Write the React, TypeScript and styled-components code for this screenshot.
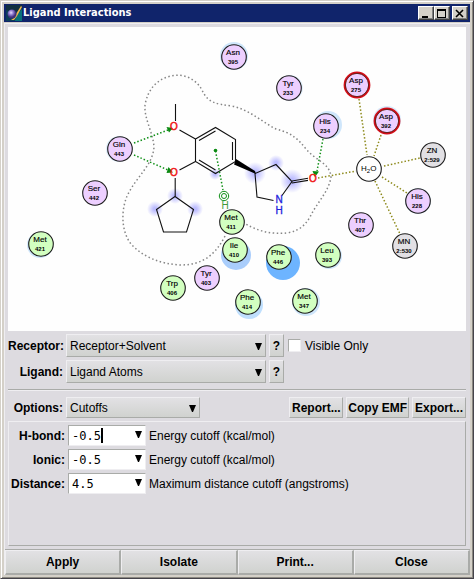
import React, { useState } from "react";
import styled, { createGlobalStyle, css } from "styled-components";

const face = "#dddbe0";
const frame = "#d4d0c8";
const light = "#efeef1";
const shade = "#a9aba8";

const GlobalStyle = createGlobalStyle`
  * { box-sizing: border-box; }
  body {
    margin: 0;
    background: ${frame};
    color: #000;
    font: 12px/16px "Liberation Sans", Arial, sans-serif;
  }
  button, select, input { font: inherit; color: inherit; margin: 0; }
`;

const raised = css`
  border: 1px solid;
  border-color: ${light} ${shade} ${shade} ${light};
  background: linear-gradient(#e2e1e4, #d0d2cf);
`;

const Window = styled.main`
  display: flex;
  flex-direction: column;
  min-height: 100vh;
  padding: 3px 2px 3px 3px;
  background: ${frame};
  border: 1px solid;
  border-color: ${frame} #45434b #45434b ${frame};
  box-shadow: inset 1px 1px #fff, inset -1px -1px #8a8880;
`;

const TitleBar = styled.header`
  display: flex;
  align-items: center;
  height: 18px;
  margin-right: 1px;
  padding: 0 2px;
  background: #10246b;
  color: #fff;
`;

const Title = styled.h1`
  flex: 1;
  margin: 0 0 0 1px;
  font: bold 11px/18px "DejaVu Sans Condensed", "Noto Sans", sans-serif;
`;

const WindowButtons = styled.div`
  display: flex;
`;

const WindowButton = styled.button<{ $apart?: boolean }>`
  display: grid;
  place-items: center;
  width: 16px;
  height: 14px;
  margin-left: ${(p) => (p.$apart ? 2 : 0)}px;
  padding: 0;
  background: ${frame};
  border: 1px solid;
  border-color: #fff #404040 #404040 #fff;
  box-shadow: inset -1px -1px #808080;
`;

const Body = styled.div`
  flex: 1;
  display: flex;
  flex-direction: column;
  margin: 1px 1px 0 0;
  background: ${face};
  border: 1px solid ${light};
  border-width: 1px 0 0 1px;
`;

const Content = styled.div`
  flex: 1;
  display: flex;
  flex-direction: column;
  padding: 3px 4px 3px 3px;
`;

const Diagram = styled.svg`
  display: block;
  width: 100%;
  height: auto;
  background: #fefefe;
  font-family: "Liberation Sans", Arial, sans-serif;
`;

const Row = styled.div<{ $top: number }>`
  display: flex;
  align-items: center;
  gap: 3px;
  margin-top: ${(p) => p.$top}px;
`;

const Label = styled.label<{ $width: number }>`
  width: ${(p) => p.$width}px;
  text-align: right;
  font-weight: bold;
  white-space: nowrap;
`;

const SelectBox = styled.div<{ $width: number }>`
  position: relative;
  width: ${(p) => p.$width}px;
`;

const Select = styled.select<{ $height: number }>`
  ${raised}
  display: block;
  appearance: none;
  width: 100%;
  height: ${(p) => p.$height}px;
  padding: 0 20px 0 3px;
  border-radius: 0;
`;

const SelectArrow = styled.svg`
  position: absolute;
  right: 4px;
  top: 50%;
  margin-top: -3px;
  pointer-events: none;
`;

const HelpButton = styled.button`
  ${raised}
  width: 15px;
  height: 23px;
  padding: 0;
  font-weight: bold;
`;

const CheckLabel = styled.label`
  display: flex;
  align-items: center;
  gap: 4px;
  margin-left: 1px;
`;

const Check = styled.input`
  appearance: none;
  width: 13px;
  height: 13px;
  background: #fff;
  border: 1px solid;
  border-color: ${shade} ${light} ${light} ${shade};
  &:checked { background: #10246b; box-shadow: inset 0 0 0 2px #fff; }
`;

const Rule = styled.hr`
  width: 100%;
  margin: 6px 0 0;
  border: 0;
  border-top: 1px solid ${shade};
  border-bottom: 1px solid ${light};
`;

const Actions = styled.div`
  display: flex;
  gap: 3px;
  margin-left: auto;
`;

const ActionButton = styled.button`
  ${raised}
  min-width: 54px;
  height: 21px;
  padding: 0 1px;
  font-weight: bold;
  white-space: nowrap;
`;

const Cutoffs = styled.section`
  flex: 1;
  display: flex;
  flex-direction: column;
  gap: 3px;
  margin-top: 3px;
  padding: 3px 2px;
  border: 1px solid;
  border-color: ${light} ${shade} ${shade} ${light};
`;

const Field = styled.div`
  display: flex;
  align-items: center;
  gap: 3px;
`;

const Combo = styled.div`
  position: relative;
  display: flex;
  width: 78px;
  height: 21px;
  background: #fff;
  border: 1px solid;
  border-color: ${shade} ${light} ${light} ${shade};
`;

const ComboInput = styled.input`
  flex: 1;
  min-width: 0;
  padding: 0 3px;
  border: 0;
  outline: 0;
  background: transparent;
  font-family: "DejaVu Sans Mono", monospace;
`;

const ComboButton = styled.button`
  display: grid;
  place-items: center;
  width: 14px;
  padding: 0 0 2px;
  border: 0;
  background: transparent;
`;

const Caret = styled.span`
  position: absolute;
  left: 32px;
  top: 2px;
  width: 2px;
  height: 15px;
  background: #000;
`;

const Footer = styled.footer`
  display: grid;
  grid-template-columns: repeat(4, 1fr);
  border-top: 1px solid ${shade};
`;

const FooterButton = styled.button`
  height: 25px;
  padding: 0;
  font-weight: bold;
  background: linear-gradient(#e2e1e4, #d0d2cf);
  border: solid;
  border-width: 1px 2px 2px 1px;
  border-color: ${light} ${shade} ${shade} ${light};
`;

const Down = () => <path d="M0 0H7L4 7H3Z" fill="#000" />;

type Kind = "polar" | "acid" | "greasy" | "metal";
type Halo = [dx: number, dy: number, r: number, color: string];
interface Residue {
  name: string;
  id: string;
  x: number;
  y: number;
  kind: Kind;
  halo?: Halo;
}

const fills: Record<Kind, string> = {
  polar: "#edcfff",
  acid: "#edcfff",
  greasy: "#d2ffc0",
  metal: "#e2e0e4",
};

const residues: Residue[] = [
  { name: "Asn", id: "395", x: 234, y: 57, kind: "polar", halo: [0, -1, 14, "#cfe6fb"] },
  { name: "Tyr", id: "233", x: 289, y: 88, kind: "polar", halo: [1, 0, 13, "#e2effd"] },
  { name: "Asp", id: "275", x: 357, y: 85, kind: "acid" },
  { name: "Asp", id: "392", x: 387, y: 121, kind: "acid", halo: [0, -1, 14, "#d8eafb"] },
  { name: "His", id: "234", x: 326, y: 126, kind: "polar", halo: [2, -1, 14, "#cfe6fb"] },
  { name: "ZN", id: "2:529", x: 433, y: 155, kind: "metal" },
  { name: "His", id: "228", x: 418, y: 201, kind: "polar", halo: [0, 0, 13, "#dcecfb"] },
  { name: "MN", id: "2:530", x: 405, y: 246, kind: "metal" },
  { name: "Thr", id: "407", x: 361, y: 225, kind: "polar" },
  { name: "Gln", id: "443", x: 120, y: 149, kind: "polar", halo: [-1, 0, 13, "#dcecfb"] },
  { name: "Ser", id: "442", x: 95, y: 193, kind: "polar" },
  { name: "Met", id: "421", x: 41, y: 244, kind: "greasy", halo: [-1, 1, 13, "#cfe6fb"] },
  { name: "Ile", id: "410", x: 235, y: 250, kind: "greasy", halo: [1, 5, 15, "#a9cdfb"] },
  { name: "Met", id: "411", x: 232, y: 222, kind: "greasy" },
  { name: "Phe", id: "446", x: 279, y: 257, kind: "greasy", halo: [4, 6, 17, "#6db4ff"] },
  { name: "Leu", id: "393", x: 328, y: 255, kind: "greasy", halo: [1, 1, 13, "#cfe6fb"] },
  { name: "Tyr", id: "403", x: 207, y: 278, kind: "polar" },
  { name: "Trp", id: "406", x: 173, y: 288, kind: "greasy" },
  { name: "Phe", id: "414", x: 248, y: 302, kind: "greasy", halo: [1, 3, 14, "#bfdffd"] },
  { name: "Met", id: "347", x: 305, y: 301, kind: "greasy", halo: [1, 1, 14, "#cfe6fb"] },
];

const glows = [
  [175, 196, 8], [155, 209, 8], [195, 209, 8], [215, 174, 6],
  [255, 173, 11], [276, 163, 8], [292, 181, 12],
];

const ResidueNode = ({ r }: { r: Residue }) => (
  <g textAnchor="middle">
    <circle
      cx={r.x} cy={r.y} r={12.3} fill={fills[r.kind]}
      stroke={r.kind === "acid" ? "#d40d18" : "#1d1d1d"}
      strokeWidth={r.kind === "acid" ? 2.2 : 1.1}
    />
    {r.kind === "acid" && <circle cx={r.x} cy={r.y} r={11.6} fill="none" stroke="#321" strokeWidth={0.7} />}
    <text x={r.x - 1} y={r.y - 2} fontSize={8} stroke="#000" strokeWidth={0.15}>{r.name}</text>
    <text x={r.x - 1} y={r.y + 7} fontSize={6} fontWeight="bold">{r.id}</text>
  </g>
);

const InteractionDiagram = () => (
  <Diagram viewBox="8 27 458 304" role="img" aria-label="Ligand interaction diagram">
    <defs>
      <radialGradient id="glow">
        <stop offset="0.2" stopColor="#bdbdff" />
        <stop offset="1" stopColor="#bdbdff" stopOpacity="0" />
      </radialGradient>
    </defs>
    {glows.map(([x, y, r]) => <circle key={`${x}-${y}`} cx={x} cy={y} r={r} fill="url(#glow)" />)}

    <path
      d="M225 236C216 254 203 265 181 265C160 264 143 257 131 244C121 231 121 211 127 196C136 177 153 165 154 147C153 132 144 119 145 105C148 88 158 79 171 76C184 73 196 79 202 90C208 103 216 104 232 106C250 110 262 122 276 129C292 133 298 139 306 149C316 161 330 163 331 177C329 191 317 203 311 215C304 229 293 235 273 233C263 232 254 229 244 223"
      fill="none" stroke="#858585" strokeWidth={1.5} strokeDasharray="1.5 2.5"
    />

    {residues.map((r) => r.halo && (
      <circle key={r.name + r.id} cx={r.x + r.halo[0]} cy={r.y + r.halo[1]} r={r.halo[2]} fill={r.halo[3]} />
    ))}

    <g fill="none" stroke="#111" strokeWidth={1.1}>
      <path d="M175.5 104V121M179.5 130L195.5 139M195.5 161.5L179.5 170M175.2 178V196.5" />
      <path d="M195.5 139L215.5 127.5L235.5 139.5V161.5L215.5 173.5L195.5 161.5Z" />
      <path d="M199 140.5L215.500 131M232.5 142V160M215.5 170L199 160" />
      <path d="M175 196.5L156.5 209.5L163.5 232H186.5L193.5 209.5Z" />
      <path d="M273.5 200.5L257 197L255 173.5L276 164.5L292 181.5L282 195.5M292 181L308 178.2M292 183L308 180.4" />
    </g>
    <path d="M256 174L234 164.500L236 159L255 171Z" fill="#000" />

    <g fill="none" stroke="#119018" strokeWidth={1.5} strokeDasharray="1.5 2">
      <path d="M134 143L168 130M134 155L168 170M215.5 151L223 190M323 139L317 171" />
    </g>
    <g fill="#0b8a12">
      <path d="M173 128L166.500 127L169 132.500ZM173 172.500L168.500 167L166.500 173ZM315 177L312.500 171L319 171.500Z" />
      <circle cx={215.5} cy={150.5} r={1.8} />
    </g>
    <g fill="none" stroke="#119018">
      <circle cx={224} cy={196} r={4.7} />
      <circle cx={224} cy={196} r={2.5} />
    </g>

    <g stroke="#8d8a1b" strokeWidth={1.5} strokeDasharray="1.5 2">
      <path d="M318 178L356 171M359 99L367 155M381 135L374 156M384 166L420 158M382 177L407 193M375 181L400 234" />
    </g>

    {residues.map((r) => <ResidueNode key={r.name + r.id} r={r} />)}
    <circle cx={369} cy={169} r={12.3} fill="#fefefe" stroke="#1d1d1d" strokeWidth={1.1} />
    <text x={361} y={171} fontSize={8}>H<tspan fontSize={6} dy={2}>2</tspan><tspan dy={-2}>O</tspan></text>

    <g fontSize={10} textAnchor="middle">
      <g fill="#f01818" stroke="#f01818" strokeWidth={0.5}>
        <text x={174} y={130}>O</text>
        <text x={174} y={176}>O</text>
        <text x={313} y={182}>O</text>
      </g>
      <g fill="#1c22dc" stroke="#1c22dc" strokeWidth={0.3}>
        <text x={279} y={203}>N</text>
        <text x={279} y={214}>H</text>
      </g>
      <text x={225} y={209} fill="#3f9a3a">H</text>
    </g>
  </Diagram>
);

const Dropdown = ({ id, value, width, height }: { id: string; value: string; width: number; height: number }) => (
  <SelectBox $width={width}>
    <Select id={id} $height={height} defaultValue={value}>
      <option>{value}</option>
    </Select>
    <SelectArrow width="7" height="7" aria-hidden="true"><Down /></SelectArrow>
  </SelectBox>
);

const fields = [
  { id: "hbond", label: "H-bond:", value: "-0.5", note: "Energy cutoff (kcal/mol)", active: true },
  { id: "ionic", label: "Ionic:", value: "-0.5", note: "Energy cutoff (kcal/mol)" },
  { id: "distance", label: "Distance:", value: "4.5", note: "Maximum distance cutoff (angstroms)" },
];

export default function App() {
  const [visibleOnly, setVisibleOnly] = useState(false);
  return (
    <>
      <GlobalStyle />
      <Window>
        <TitleBar>
          <svg width="16" height="16" viewBox="0 0 16 16" aria-hidden="true">
            <defs>
              <radialGradient id="orb" cx="0.4" cy="0.35">
                <stop offset="0" stopColor="#e8dcff" />
                <stop offset="0.5" stopColor="#8f7bd0" />
                <stop offset="1" stopColor="#40307c" />
              </radialGradient>
            </defs>
            <path d="M0 0H16V16H0Z" fill="#0b3f58" />
            <path d="M0 0H16V3L9 8L0 5Z" fill="#12303f" />
            <path d="M10 11L16 4V16H9Z" fill="#087078" />
            <path d="M15 1L10 9L8 13L5 15H8L11 11L16 2Z" fill="#f2b84c" />
            <circle cx="6" cy="9" r="4.5" fill="url(#orb)" />
          </svg>
          <Title>Ligand Interactions</Title>
          <WindowButtons>
            <WindowButton aria-label="Minimize">
              <svg width="10" height="9"><path d="M1 7H7V9H1Z" /></svg>
            </WindowButton>
            <WindowButton aria-label="Maximize">
              <svg width="10" height="9"><path d="M0 0H9V9H0ZM1 2V8H8V2Z" fillRule="evenodd" /></svg>
            </WindowButton>
            <WindowButton aria-label="Close window" $apart>
              <svg width="10" height="9"><path d="M1 1L8 8M8 1L1 8" stroke="#000" strokeWidth="1.6" /></svg>
            </WindowButton>
          </WindowButtons>
        </TitleBar>
        <Body>
          <Content>
            <InteractionDiagram />
            <Row $top={3}>
              <Label $width={55} htmlFor="receptor">Receptor:</Label>
              <Dropdown id="receptor" value="Receptor+Solvent" width={200} height={23} />
              <HelpButton aria-label="Receptor help">?</HelpButton>
              <CheckLabel>
                <Check type="checkbox" checked={visibleOnly} onChange={(e) => setVisibleOnly(e.target.checked)} />
                Visible Only
              </CheckLabel>
            </Row>
            <Row $top={3}>
              <Label $width={55} htmlFor="ligand">Ligand:</Label>
              <Dropdown id="ligand" value="Ligand Atoms" width={200} height={23} />
              <HelpButton aria-label="Ligand help">?</HelpButton>
            </Row>
            <Rule />
            <Row $top={6}>
              <Label $width={55} htmlFor="options">Options:</Label>
              <Dropdown id="options" value="Cutoffs" width={134} height={21} />
              <Actions>
                <ActionButton>Report...</ActionButton>
                <ActionButton>Copy EMF</ActionButton>
                <ActionButton>Export...</ActionButton>
              </Actions>
            </Row>
            <Cutoffs>
              {fields.map((f) => (
                <Field key={f.id}>
                  <Label $width={54} htmlFor={f.id}>{f.label}</Label>
                  <Combo>
                    <ComboInput id={f.id} defaultValue={f.value} />
                    {f.active && <Caret />}
                    <ComboButton aria-label={`Choose ${f.label}`}>
                      <svg width="7" height="7"><Down /></svg>
                    </ComboButton>
                  </Combo>
                  <span>{f.note}</span>
                </Field>
              ))}
            </Cutoffs>
          </Content>
          <Footer>
            <FooterButton>Apply</FooterButton>
            <FooterButton>Isolate</FooterButton>
            <FooterButton>Print...</FooterButton>
            <FooterButton>Close</FooterButton>
          </Footer>
        </Body>
      </Window>
    </>
  );
}
